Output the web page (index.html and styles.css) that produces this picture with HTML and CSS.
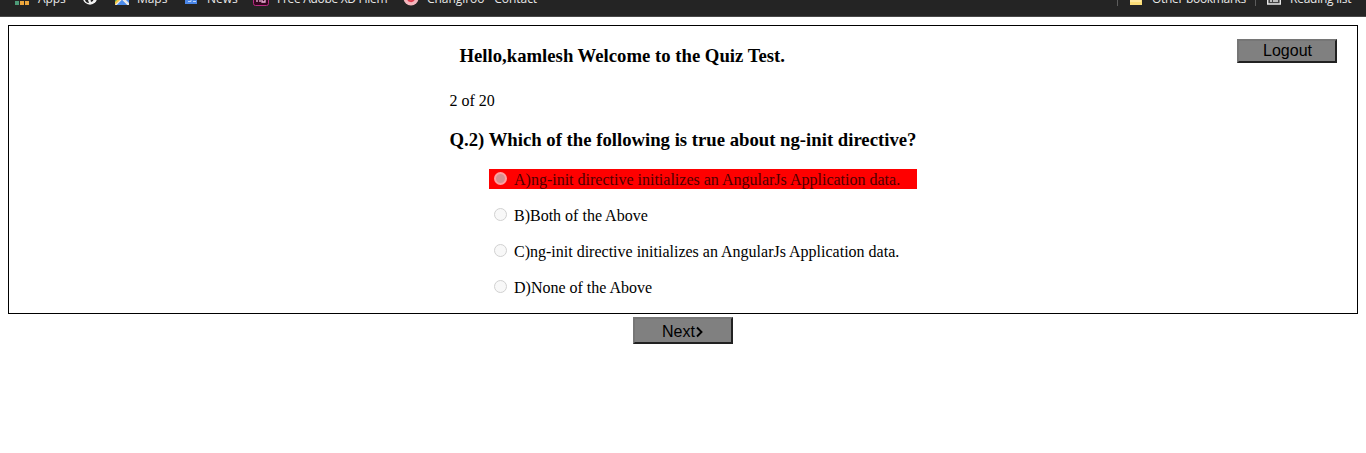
FILE: index.html
```
<!DOCTYPE html>
<html lang="en">
<head>
<meta charset="utf-8">
<title>Quiz Test</title>
<link rel="stylesheet" href="styles.css">
</head>
<body>
<header class="bookmarks">
  <div class="group">
    <span class="bookmark apps"><svg class="icon" width="14" height="16" viewBox="0 0 14 16"><path fill="#4d9a78" d="M0 11h4v4H0z"/><path fill="#eda63c" d="M5 11h4v4H5zM10 11h4v4h-4z"/></svg><span>Apps</span></span>
    <span class="bookmark globe"><svg class="icon" width="16" height="16" viewBox="0 0 16 16"><circle cx="8" cy="7.5" r="7.2" fill="#f1f1f1"/><path fill="#242424" d="M3 7l3 3 1 3C4 13 2 10 3 7zM8 7h4l-1 4-2 1z"/></svg></span>
    <span class="bookmark maps"><svg class="icon" width="14" height="16" viewBox="0 0 14 16"><path fill="#4385ea" d="M0 2h14v13H0z"/><path fill="#45a15b" d="M0 2h8L0 14z"/><path fill="#e8e8e8" d="M0 13L7 6l7 7v2h-2L7 10l-5 5H0z"/><path fill="#4c8cec" d="M7 10l5 5H2z"/><path fill="#f4c543" d="M0 12l3-3 2 1-5 5z"/></svg><span>Maps</span></span>
    <span class="bookmark news"><svg class="icon" width="13" height="16" viewBox="0 0 13 16"><path fill="#4a86e8" d="M0 2h12v12H0z"/><path fill="none" stroke="#bdd5fb" d="M3 9.5h3v2H3M8 9.5h3M8 11.5h3"/></svg><span>News</span></span>
    <span class="bookmark adobe"><svg class="icon" width="16" height="16" viewBox="0 0 16 16"><rect x=".5" y=".5" width="15" height="15" rx="2" fill="#35071f" stroke="#b82a83"/><path d="M4 12V8h3v4M9 8v4h3V8" fill="none" stroke="#f0b4dc" stroke-width="1.3"/></svg><span>Free Adobe XD Filem</span></span>
    <span class="bookmark contact"><svg class="icon" width="16" height="16" viewBox="0 0 16 16"><circle cx="8" cy="8" r="7.5" fill="#f3b6bd"/><path d="M5 8c0 4 5 4 6 1" fill="none" stroke="#df394c" stroke-width="2"/></svg><span>Changiroo - Contact</span></span>
  </div>
  <div class="group">
    <span class="divider"></span>
    <span class="bookmark folder"><svg class="icon" width="12" height="16" viewBox="0 0 12 16"><path fill="#fbdd78" d="M0 3h12v12H0z"/><path fill="#ffe9a0" d="M0 10h11v2H0z"/></svg><span>Other bookmarks</span></span>
    <span class="divider"></span>
    <span class="bookmark reading"><svg class="icon" width="14" height="16" viewBox="0 0 14 16"><path fill="#444" stroke="#e6e6e6" stroke-width="1.4" d="M.7 2h12.6v12H.7z"/><path stroke="#e6e6e6" stroke-width="1.4" d="M3 11h2M6 11h5M3 8h2M6 8h5"/></svg><span>Reading list</span></span>
  </div>
</header>
<main class="quiz">
  <section class="panel">
    <button class="button logout">Logout</button>
    <div class="content">
      <h3 class="welcome">Hello,kamlesh Welcome to the Quiz Test.</h3>
      <p class="progress">2 of 20</p>
      <h3 class="question">Q.2) Which of the following is true about ng-init directive?</h3>
      <ul class="options">
        <li class="option wrong"><span class="radio checked"></span><span>A)ng-init directive initializes an AngularJs Application data.</span></li>
        <li class="option"><span class="radio"></span><span>B)Both of the Above</span></li>
        <li class="option"><span class="radio"></span><span>C)ng-init directive initializes an AngularJs Application data.</span></li>
        <li class="option"><span class="radio"></span><span>D)None of the Above</span></li>
      </ul>
    </div>
  </section>
  <button class="button next">Next<svg width="9" height="12" viewBox="0 0 9 12"><path d="M2 1.5L6.5 6 2 10.5" fill="none" stroke="#000" stroke-width="1.9"/></svg></button>
</main>
</body>
</html>
```
FILE: styles.css
```
* { box-sizing: border-box; }
body { margin: 0; background: #fff; color: #000; font: 16px "Liberation Serif", serif; }

.bookmarks {
  display: flex; justify-content: space-between;
  height: 17px; padding: 0 14px 0 15px; overflow: hidden;
  background: #242424; border-bottom: 1px solid #484848;
  color: #e8e8e8; font: 12px/18px "Open Sans", sans-serif;
}
.group { display: flex; height: 16px; margin-top: -10px; white-space: nowrap; }
.bookmark { display: flex; flex: none; gap: 9px; height: 16px; letter-spacing: -.05px; }
.icon { flex: none; display: block; }
.apps { width: 67px; }
.globe { width: 33px; }
.maps { width: 70px; gap: 8px; }
.news { width: 68px; }
.adobe { width: 150px; gap: 8px; letter-spacing: -.3px; }
.contact { gap: 8px; }
.folder { width: 137px; padding-left: 12px; gap: 10px; letter-spacing: -.3px; }
.reading { width: 96px; padding-left: 11px; letter-spacing: -.25px; }
.divider { flex: none; width: 1px; height: 16px; background: #5c5c5c; }

.quiz { padding: 8px; display: flex; flex-direction: column; align-items: center; }
.panel {
  display: grid; grid-template-columns: 1fr 467px 1fr;
  width: 1350px; height: 289px; border: 1px solid #000;
}
.content { grid-column: 2; grid-row: 1; }
.button {
  width: 100px; padding: 0; border: 2px solid;
  border-color: #767676 #212121 #212121 #767676;
  background: #808080; color: #000;
  font: 16px "Liberation Sans", sans-serif;
}
.logout { grid-column: 3; grid-row: 1; justify-self: end; height: 24px; margin: 13px 20px 0 0; padding-left: 1px; }
.next { display: flex; align-items: center; justify-content: center; height: 27px; margin-top: 3px; padding-top: 2px; }
.welcome, .question { margin: 0; font-size: 18.72px; line-height: 20px; font-weight: bold; white-space: nowrap; }
.welcome { margin: 20px 0 0 10px; }
.progress { margin: 26px 0 0; line-height: 18px; }
.question { margin-top: 20px; }
.options { display: grid; gap: 16px; margin: 19px 0 0; padding: 0 0 0 39px; list-style: none; }
.option { display: flex; height: 20px; padding-left: 5px; line-height: 22px; white-space: nowrap; }
.wrong { background: #f00; color: #4d0000; }
.radio {
  width: 13px; height: 13px; margin: 3px 7.5px 0 0;
  border: 1px solid #d1d1d1; border-radius: 50%; background: #f8f8f8;
}
.checked { border: 2px solid #ff9f9f; background: #d29292; }
```
